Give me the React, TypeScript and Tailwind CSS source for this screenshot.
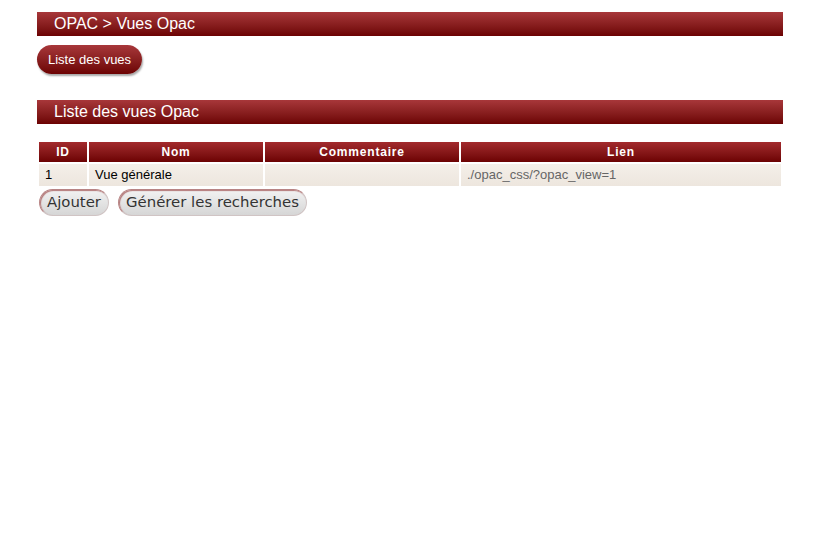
export default function App() {
  const bar = 'h-[24px] flex items-center pl-[17px] text-white text-[16px] bg-gradient-to-b from-[#a8373a] to-[#6c0203]'
  const th = 'h-[20px] text-white text-[12px] font-bold text-center bg-gradient-to-b from-[#a32a2d] to-[#6c0203] tracking-[0.8px]'
  const td = 'h-[22px] bg-gradient-to-b from-[#f4efe9] to-[#ede6de] text-[13px] px-[6px]'
  const btn = 'h-[27px] px-[7px] rounded-full border border-[#b88484] border-b-[#d0c4c4] border-r-[#d0c4c4] bg-gradient-to-b from-[#f2f2f2] to-[#d6d6d6] text-[#333] text-[14.9px] shadow-[inset_1px_1px_1px_rgba(140,40,40,0.6)]'
  return (
    <div className="w-[813px] h-[536px] bg-white pl-[37px] pr-[30px] pt-[12px]" style={{ fontFamily: '"Liberation Sans", Arial, sans-serif' }}>
      <div className={bar}>OPAC &gt; Vues Opac</div>
      <div className="mt-[9px]">
        <button className="h-[29px] px-[11px] rounded-full text-white text-[13px] bg-gradient-to-b from-[#a8373a] to-[#6c0203] shadow-[1px_2px_2px_rgba(0,0,0,0.35)]">
          Liste des vues
        </button>
      </div>
      <div className={bar + ' mt-[26px] h-[23px]'}>Liste des vues Opac</div>
      <table className="mt-[16px] w-full border-separate border-spacing-[2px]">
        <thead>
          <tr>
            <th className={th + ' w-[48px]'}>ID</th>
            <th className={th + ' w-[174px]'}>Nom</th>
            <th className={th + ' w-[194px]'}>Commentaire</th>
            <th className={th}>Lien</th>
          </tr>
        </thead>
        <tbody>
          <tr>
            <td className={td + ' text-black'}>1</td>
            <td className={td + ' text-black'}>Vue générale</td>
            <td className={td}></td>
            <td className={td + ' text-[#666]'}>./opac_css/?opac_view=1</td>
          </tr>
        </tbody>
      </table>
      <div className="flex gap-[9px] pl-[2px] mt-[1px]" style={{ fontFamily: '"DejaVu Sans", sans-serif' }}>
        <button className={btn}>Ajouter</button>
        <button className={btn}>Générer les recherches</button>
      </div>
    </div>
  )
}
